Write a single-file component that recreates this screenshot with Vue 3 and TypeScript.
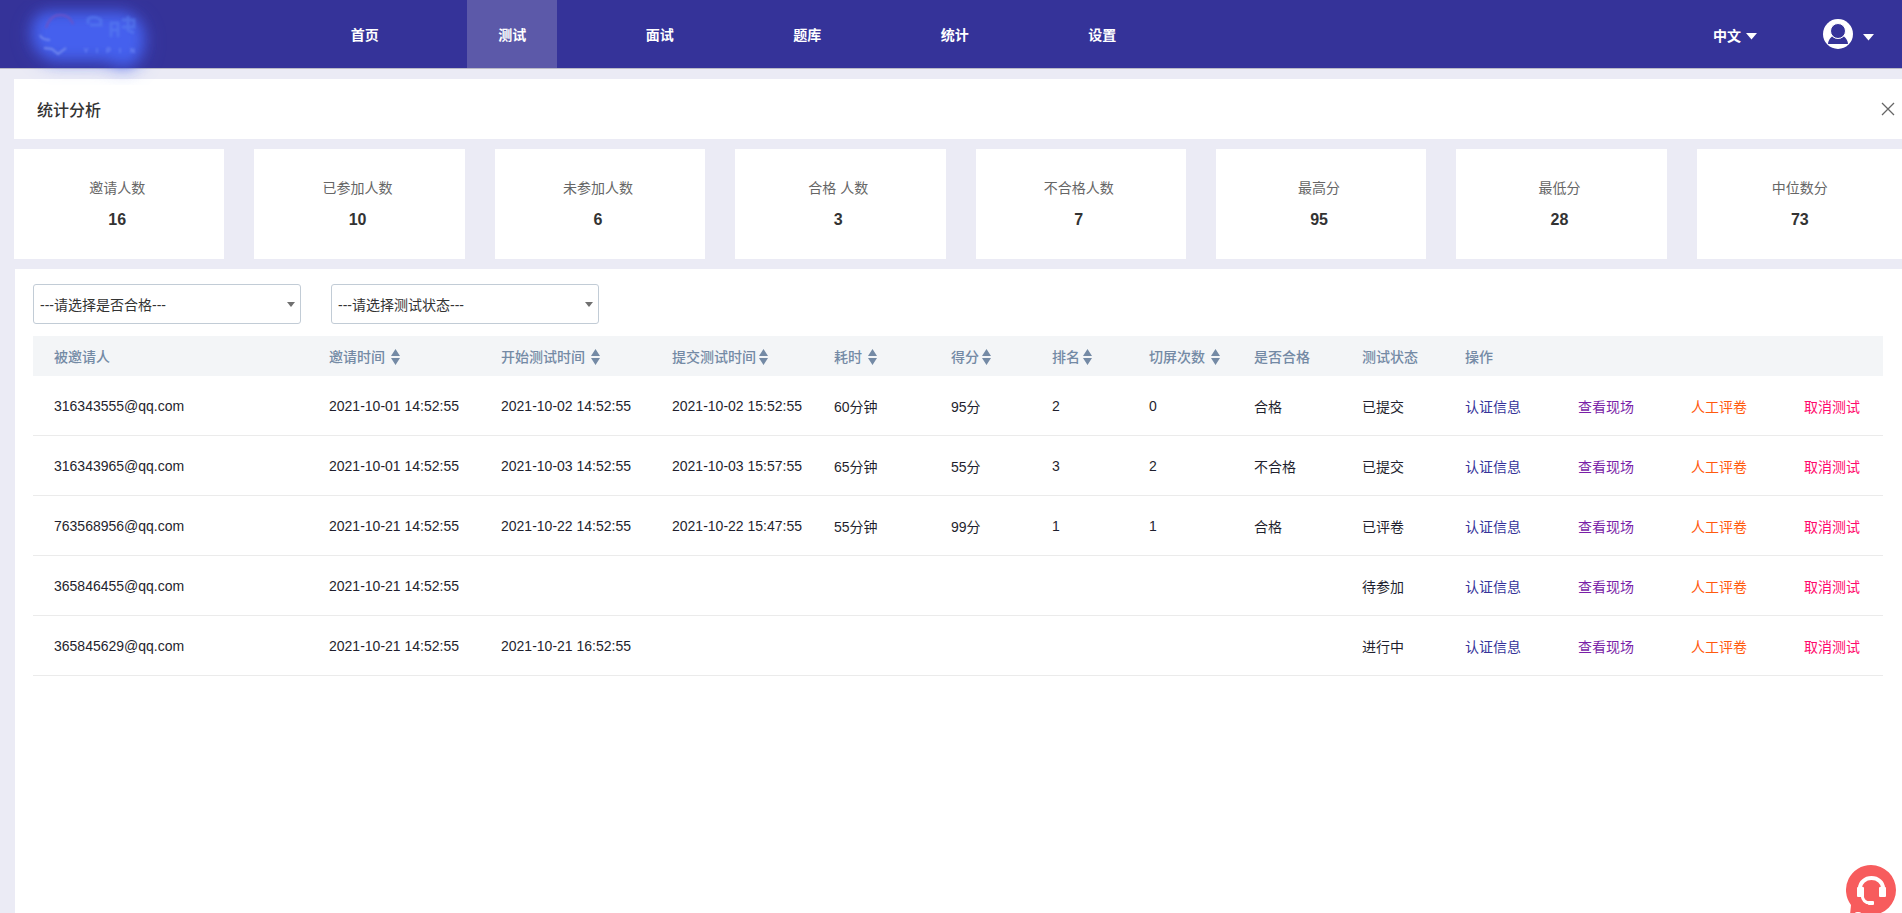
<script setup lang="ts">
import { ref } from 'vue'

interface Column {
  key: string
  label: string
  sort: '' | 'near' | 'far'
}

interface Row {
  mail: string
  invited: string
  started: string
  submitted: string
  cost: string
  score: string
  rank: string
  switches: string
  passed: string
  status: string
}

const navItems = ['首页', '测试', '面试', '题库', '统计', '设置']
const activeNav = ref('测试')

const stats = [
  { label: '邀请人数', value: 16 },
  { label: '已参加人数', value: 10 },
  { label: '未参加人数', value: 6 },
  { label: '合格 人数', value: 3 },
  { label: '不合格人数', value: 7 },
  { label: '最高分', value: 95 },
  { label: '最低分', value: 28 },
  { label: '中位数分', value: 73 },
]

const columns: Column[] = [
  { key: 'mail', label: '被邀请人', sort: '' },
  { key: 'invited', label: '邀请时间', sort: 'far' },
  { key: 'started', label: '开始测试时间', sort: 'far' },
  { key: 'submitted', label: '提交测试时间', sort: 'near' },
  { key: 'cost', label: '耗时', sort: 'far' },
  { key: 'score', label: '得分', sort: 'near' },
  { key: 'rank', label: '排名', sort: 'near' },
  { key: 'switches', label: '切屏次数', sort: 'far' },
  { key: 'passed', label: '是否合格', sort: '' },
  { key: 'status', label: '测试状态', sort: '' },
  { key: 'actions', label: '操作', sort: '' },
]

const rows: Row[] = [
  { mail: '316343555@qq.com', invited: '2021-10-01 14:52:55', started: '2021-10-02 14:52:55', submitted: '2021-10-02 15:52:55', cost: '60分钟', score: '95分', rank: '2', switches: '0', passed: '合格', status: '已提交' },
  { mail: '316343965@qq.com', invited: '2021-10-01 14:52:55', started: '2021-10-03 14:52:55', submitted: '2021-10-03 15:57:55', cost: '65分钟', score: '55分', rank: '3', switches: '2', passed: '不合格', status: '已提交' },
  { mail: '763568956@qq.com', invited: '2021-10-21 14:52:55', started: '2021-10-22 14:52:55', submitted: '2021-10-22 15:47:55', cost: '55分钟', score: '99分', rank: '1', switches: '1', passed: '合格', status: '已评卷' },
  { mail: '365846455@qq.com', invited: '2021-10-21 14:52:55', started: '', submitted: '', cost: '', score: '', rank: '', switches: '', passed: '', status: '待参加' },
  { mail: '365845629@qq.com', invited: '2021-10-21 14:52:55', started: '2021-10-21 16:52:55', submitted: '', cost: '', score: '', rank: '', switches: '', passed: '', status: '进行中' },
]

const passFilter = ref('')
const statusFilter = ref('')
</script>

<template>
  <div class="page">
    <header class="topbar">
      <a class="logo" href="#" aria-label="首页">
        <svg class="logo-art" viewBox="0 0 200 100" aria-hidden="true">
          <defs>
            <filter id="glow" x="-50%" y="-50%" width="200%" height="200%">
              <feGaussianBlur stdDeviation="7" />
            </filter>
            <filter id="halo" x="-50%" y="-50%" width="200%" height="200%">
              <feGaussianBlur stdDeviation="11" />
            </filter>
            <filter id="soft" x="-20%" y="-20%" width="140%" height="140%">
              <feGaussianBlur stdDeviation="1" />
            </filter>
          </defs>
          <path d="M48 22 H124 Q138 26 138 40 Q138 60 124 64 L104 56 H54 Q38 50 38 34 Q38 24 48 22Z" fill="#4560ee" stroke="#4560ee" stroke-width="14" stroke-linejoin="round" opacity="0.35" filter="url(#halo)" />
          <path d="M48 18 H122 Q138 22 138 38 Q138 58 124 60 L104 54 H54 Q38 48 38 32 Q38 20 48 18Z" fill="#4560ee" stroke="#4560ee" stroke-width="11" stroke-linejoin="round" filter="url(#glow)" />
          <g fill="none" filter="url(#soft)">
            <path d="M46 28 Q50 15 60 15 Q70 15 73 24" stroke="#6a52c8" stroke-width="2" />
            <path d="M40 35 Q42 40 50 40 M44 48 L52 49 L58 54 L66 48" stroke="#7188ee" stroke-width="2" />
            <path d="M88 24 V19 Q94 15 101 20 V25 H90 M110 23 H119 M110 30 H119 M111 22 V37 M118 22 V37 M122 20 H134 V27 H122 M128 16 V30 L134 33" stroke="#587df0" stroke-width="3" opacity="0.6" />
            <path d="M84 48 L86 51 L88 48 M86 51 V53 M97 48 V53 M107 53 V48 H110 V51 H107 M120 48 V53 M131 53 V48 L134 53 V48" stroke="#6b83f2" stroke-width="1" />
          </g>
        </svg>
      </a>
      <nav class="nav">
        <a
          v-for="item in navItems"
          :key="item"
          href="#"
          class="nav-link"
          :class="{ active: item === activeNav }"
          @click.prevent="activeNav = item"
        >{{ item }}</a>
      </nav>
      <div class="tools">
        <button type="button" class="tool">
          中文
          <svg class="caret" viewBox="0 0 11 7" aria-hidden="true"><path d="M0 0H11L5.500 6.500Z" fill="#fff" /></svg>
        </button>
        <button type="button" class="tool user" aria-label="用户">
          <svg class="avatar" viewBox="0 0 30 30" aria-hidden="true">
            <circle cx="15" cy="15" r="15" fill="#fff" />
            <path d="M9 17.500 Q15 22 21 17.500 Q24.500 20 25 25 H5 Q5.500 20 9 17.500Z" fill="#353399" />
            <ellipse cx="15" cy="12" rx="7.500" ry="7.500" fill="#353399" stroke="#fff" stroke-width="1" />
          </svg>
          <svg class="caret" viewBox="0 0 11 7" aria-hidden="true"><path d="M0 0H11L5.500 6.500Z" fill="#fff" /></svg>
        </button>
      </div>
    </header>

    <main class="content">
      <section class="title-bar">
        <h1>统计分析</h1>
        <button type="button" class="close" aria-label="关闭">
          <svg viewBox="0 0 14 14" aria-hidden="true"><path d="M1 1L13 13M13 1L1 13" stroke="#666" stroke-width="1.300" /></svg>
        </button>
      </section>

      <section class="stats">
        <article v-for="stat in stats" :key="stat.label" class="stat">
          <p class="stat-label">{{ stat.label }}</p>
          <p class="stat-value">{{ stat.value }}</p>
        </article>
      </section>

      <section class="panel">
        <div class="filters">
          <div class="select-box">
            <select v-model="passFilter" aria-label="是否合格">
              <option value="">---请选择是否合格---</option>
              <option value="合格">合格</option>
              <option value="不合格">不合格</option>
            </select>
          </div>
          <div class="select-box">
            <select v-model="statusFilter" aria-label="测试状态">
              <option value="">---请选择测试状态---</option>
              <option value="已提交">已提交</option>
              <option value="已评卷">已评卷</option>
              <option value="待参加">待参加</option>
              <option value="进行中">进行中</option>
            </select>
          </div>
        </div>

        <table class="table">
          <colgroup>
            <col v-for="col in columns" :key="col.key" :class="'col-' + col.key" />
          </colgroup>
          <thead>
            <tr>
              <th v-for="col in columns" :key="col.key" scope="col">
                <button v-if="col.sort" type="button" class="sort" :class="col.sort">
                  {{ col.label }}
                  <svg viewBox="0 0 9 16" aria-hidden="true">
                    <path d="M4.500 0L9 7H0ZM0 9H9L4.500 16Z" fill="#748aa5" />
                  </svg>
                </button>
                <template v-else>{{ col.label }}</template>
              </th>
            </tr>
          </thead>
          <tbody>
            <tr v-for="row in rows" :key="row.mail">
              <td>{{ row.mail }}</td>
              <td>{{ row.invited }}</td>
              <td>{{ row.started }}</td>
              <td>{{ row.submitted }}</td>
              <td class="cjk">{{ row.cost }}</td>
              <td class="cjk">{{ row.score }}</td>
              <td>{{ row.rank }}</td>
              <td>{{ row.switches }}</td>
              <td class="cjk">{{ row.passed }}</td>
              <td class="cjk">{{ row.status }}</td>
              <td class="cjk">
                <div class="actions">
                  <a href="#" class="verify">认证信息</a>
                  <a href="#" class="view">查看现场</a>
                  <a href="#" class="review">人工评卷</a>
                  <a href="#" class="cancel">取消测试</a>
                </div>
              </td>
            </tr>
          </tbody>
        </table>
      </section>
    </main>

    <button type="button" class="service" aria-label="在线客服">
      <svg viewBox="0 0 50 48" aria-hidden="true">
        <path d="M25 0A25 25 0 1 1 25 50H4L5 40A25 25 0 0 1 25 0Z" fill="#f75c5d" />
        <path d="M14 24V23a11.500 10 0 0 1 23 0V24" fill="none" stroke="#fff" stroke-width="4" />
        <rect x="11" y="22" width="7" height="10" rx="1" fill="#fff" />
        <rect x="33" y="22" width="7" height="10" rx="1" fill="#fff" />
        <path d="M16 30Q17 38 24 38" fill="none" stroke="#fff" stroke-width="3" />
        <rect x="22" y="36" width="6" height="4" rx="1" fill="#fff" />
        <ellipse cx="12" cy="48" rx="3" ry="1" fill="#fff" />
      </svg>
    </button>
  </div>
</template>

<style>
body {
  margin: 0;
  background: #ebebf5;
}
</style>

<style scoped>
.page {
  display: flex;
  flex-direction: column;
  min-height: 100vh;
  overflow: hidden;
  background: #ebebf5;
  color: #333;
  font: 14px/20px "Liberation Sans", "Noto Sans CJK SC", sans-serif;
}

.page * {
  box-sizing: border-box;
}

a {
  text-decoration: none;
}

button {
  padding: 0;
  border: 0;
  background: none;
  color: inherit;
  font: inherit;
  cursor: pointer;
}

svg {
  display: block;
}

.topbar {
  display: flex;
  height: 69px;
  border-bottom: 1px solid #b9b9c6;
  background: #353399;
  color: #fff;
  font-weight: 700;
}

.logo {
  position: relative;
  z-index: 1;
  flex: none;
  width: 291px;
}

.logo-art {
  width: 200px;
  height: 100px;
}

.nav {
  display: grid;
  grid-template-columns: repeat(6, 1fr);
  justify-items: center;
  width: 885px;
}

.nav-link {
  display: flex;
  align-items: center;
  justify-content: center;
  width: 90px;
  padding-top: 2px;
  color: #fff;
}

.nav-link.active {
  background: #5c59a9;
}

.tools {
  display: flex;
  align-items: center;
  gap: 66px;
  margin-left: auto;
  padding-right: 28px;
}

.tool {
  display: flex;
  align-items: center;
  gap: 5px;
  padding-top: 4px;
}

.tool.user {
  gap: 10px;
  padding-top: 0;
}

.caret {
  width: 11px;
  height: 7px;
}

.user .caret {
  margin-top: 6px;
}

.avatar {
  width: 30px;
  height: 30px;
}

.content {
  display: flex;
  flex: 1;
  flex-direction: column;
  gap: 10px;
  padding: 10px 0 0 14px;
}

.title-bar {
  display: flex;
  align-items: center;
  justify-content: space-between;
  height: 60px;
  padding: 0 7px 0 23px;
  background: #fff;
}

h1 {
  margin: 0;
  padding-top: 4px;
  font-size: 16px;
  font-weight: 500;
}

.close svg {
  width: 14px;
  height: 14px;
}

.stats {
  display: grid;
  grid-template-columns: repeat(8, 1fr);
  gap: 30px;
  margin-right: -5px;
}

.stat {
  height: 110px;
  padding: 29px 4px 0 0;
  background: #fff;
  text-align: center;
}

.stat-label {
  margin: 0 0 12px;
  color: #666;
}

.stat-value {
  margin: 0;
  font-size: 16px;
  font-weight: 700;
}

.panel {
  flex: 1;
  margin-left: 1px;
  padding: 15px 19px 0 18px;
  background: #fff;
}

.filters {
  display: flex;
  gap: 30px;
  margin-bottom: 12px;
}

.select-box {
  position: relative;
  width: 268px;
}

.select-box::after {
  position: absolute;
  top: 18px;
  right: 6px;
  border: 4px solid transparent;
  border-top: 5px solid #707070;
  border-bottom: 0;
  content: "";
  pointer-events: none;
}

select {
  display: block;
  width: 100%;
  height: 40px;
  padding: 2px 6px 0;
  border: 1px solid #c2ccd6;
  border-radius: 3px;
  appearance: none;
  background: #fff;
  color: #333;
  font: inherit;
}

.table {
  width: 100%;
  border-collapse: separate;
  border-spacing: 0;
  table-layout: fixed;
}

.col-mail { width: 296px; }
.col-invited { width: 172px; }
.col-started { width: 171px; }
.col-submitted { width: 162px; }
.col-cost { width: 117px; }
.col-score { width: 101px; }
.col-rank { width: 97px; }
.col-switches { width: 105px; }
.col-passed { width: 108px; }
.col-status { width: 103px; }
.col-actions { width: 418px; }

th,
td {
  padding: 0;
  text-align: left;
  white-space: nowrap;
}

th:first-child,
td:first-child {
  padding-left: 21px;
}

th {
  height: 40px;
  padding-top: 2px;
  background: #f3f5f7;
  color: #748aa5;
  font-weight: 500;
}

td {
  height: 60px;
  border-bottom: 1px solid #ebebeb;
  color: #1f1f2e;
}

td.cjk {
  padding-top: 2px;
}

.sort {
  display: flex;
  align-items: center;
  gap: 6px;
}

.sort.near {
  gap: 3px;
}

.sort svg {
  width: 9px;
  height: 16px;
}

.actions {
  display: flex;
  gap: 57px;
}

.verify { color: #353399; }
.view { color: #7a1fa8; }
.review { color: #ff5a0f; }
.cancel { color: #ff0a6c; }

.service {
  position: fixed;
  right: 6px;
  bottom: 0;
  width: 50px;
  height: 48px;
}
</style>
